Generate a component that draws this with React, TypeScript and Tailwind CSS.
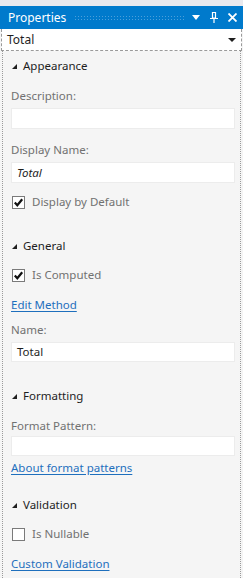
import React from "react"

const font = { fontFamily: '"Noto Sans", "Open Sans", sans-serif' }

function Tri() {
  return (
    <svg width="5" height="5" viewBox="0 0 5 5" className="mr-[6px] shrink-0">
      <polygon points="5,0 5,5 0,5" fill="#1e1e1e" />
    </svg>
  )
}

function Header({ label, className }: { label: string; className: string }) {
  return (
    <div className={"flex items-center h-[16px] pl-[1px] text-[#1e1e1e] " + className}>
      <Tri />
      <span>{label}</span>
    </div>
  )
}

function Label({ label, className }: { label: string; className: string }) {
  return <div className={"h-[16px] leading-[16px] text-[#717171] " + className}>{label}</div>
}

function Field({ value, className, italic }: { value?: string; className: string; italic?: boolean }) {
  return (
    <div className={"bg-white border border-[#ececec] flex items-center px-[5px] text-[#1e1e1e] " + (italic ? "italic " : "") + className}>
      {value}
    </div>
  )
}

function Check({ label, checked, className }: { label: string; checked: boolean; className: string }) {
  return (
    <div className={"flex items-center h-[16px] pl-[1px] " + className}>
      <div className="w-[13px] h-[13px] bg-white border border-[#7a7a7a] flex items-center justify-center">
        {checked && (
          <svg width="11" height="11" viewBox="0 0 11 11">
            <path d="M1.8 5.5 L4.3 8.2 L9.2 2.2" stroke="#111" strokeWidth="2.2" fill="none" />
          </svg>
        )}
      </div>
      <span className="ml-[7px] text-[#717171]">{label}</span>
    </div>
  )
}

function Link({ label, className }: { label: string; className: string }) {
  return <div className={"h-[16px] leading-[16px] text-[#1e6fbd] underline underline-offset-2 " + className}>{label}</div>
}

export default function App() {
  return (
    <div className="w-[243px] h-[578px] bg-[#f5f5f5] flex flex-col text-[11.5px] overflow-hidden" style={font}>
      <div className="h-[6px] bg-[#e8e9ee] shrink-0" />
      <div className="h-[23px] bg-[#007acc] flex items-center pl-[8px] pr-[6px] text-white shrink-0 text-[12px]">
        <span className="leading-[16px]">Properties</span>
        <div className="flex-1 h-[6px] mx-[8px] bg-[radial-gradient(circle,#4c9fda_0.8px,transparent_1px)] bg-[length:3px_3px]" />
        <svg width="8" height="5" viewBox="0 0 8 5" className="mr-[10px]">
          <polygon points="0,0 8,0 4,5" fill="#fff" />
        </svg>
        <svg width="8" height="11" viewBox="0 0 8 11" className="mr-[10px]">
          <path d="M2.5 0.5 H5.5 V6 H2.5 Z M0 6.5 H8 M4 6.5 V11" stroke="#fff" strokeWidth="1.2" fill="none" />
        </svg>
        <svg width="9" height="9" viewBox="0 0 9 9">
          <path d="M0.5 0.5 L8.5 8.5 M8.5 0.5 L0.5 8.5" stroke="#fff" strokeWidth="1.8" />
        </svg>
      </div>
      <div className="h-[22px] bg-white border border-dashed border-[#9a9a9a] border-t-0 mx-[1px] flex items-center pl-[5px] pr-[5px] text-[#1e1e1e] shrink-0 text-[12px]">
        <span className="flex-1">Total</span>
        <svg width="8" height="4" viewBox="0 0 8 4">
          <polygon points="0,0 8,0 4,4" fill="#1e1e1e" />
        </svg>
      </div>
      <div className="flex-1 mx-[2px] border-x border-dotted border-[#9a9a9a] pl-[8px] pr-[5px] flex flex-col">
        <Header label="Appearance" className="mt-[7px]" />
        <Label label="Description:" className="mt-[14px]" />
        <Field className="mt-[4px] h-[21px]" />
        <Label label="Display Name:" className="mt-[13px]" />
        <Field value="Total" italic className="mt-[4px] h-[21px]" />
        <Check label="Display by Default" checked className="mt-[11px]" />

        <Header label="General" className="mt-[28px]" />
        <Check label="Is Computed" checked className="mt-[13px]" />
        <Link label="Edit Method" className="mt-[14px]" />
        <Label label="Name:" className="mt-[9px]" />
        <Field value="Total" className="mt-[4px] h-[20px]" />

        <Header label="Formatting" className="mt-[26px]" />
        <Label label="Format Pattern:" className="mt-[14px]" />
        <Field className="mt-[2px] h-[20px]" />
        <Link label="About format patterns" className="mt-[4px]" />

        <Header label="Validation" className="mt-[21px]" />
        <Check label="Is Nullable" checked={false} className="mt-[13px]" />
        <Link label="Custom Validation" className="mt-[14px]" />
      </div>
    </div>
  )
}
